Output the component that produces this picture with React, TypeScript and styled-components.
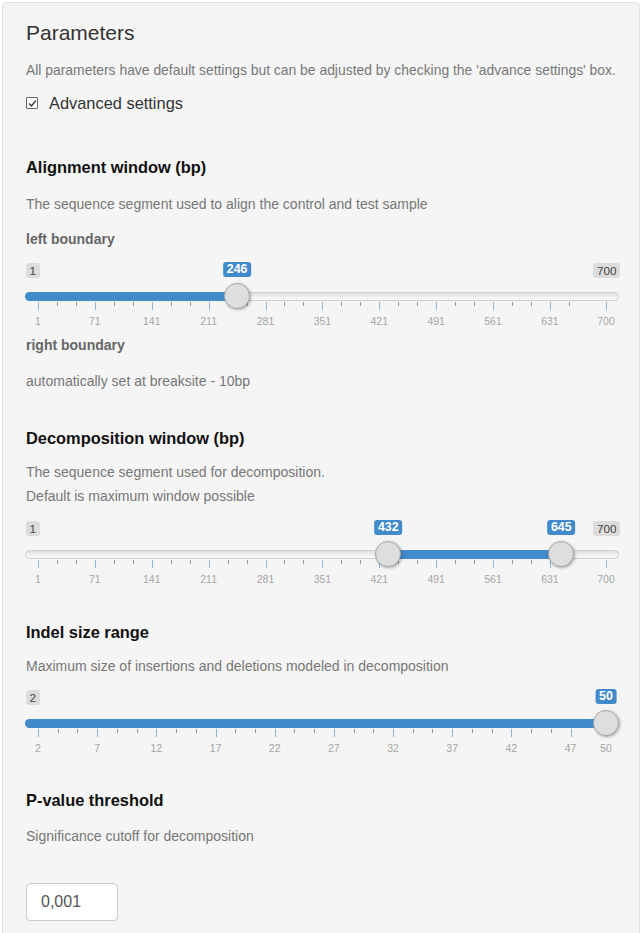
import React from 'react';
import styled, {createGlobalStyle} from 'styled-components';

const GlobalStyle = createGlobalStyle`
  body {
    margin: 0;
    background: #fff;
    font-family: "Liberation Sans", Arial, Helvetica, sans-serif;
  }
`;

const BLUE = '#428bca';

type SliderProps = {
  min: number;
  max: number;
  values: number[];
  step: number;
};

const RangeSlider: React.FC<SliderProps> = ({min, max, values, step}) => {
  const pct = (v: number) => (v - min) / (max - min);
  const at = (v: number) => `calc(13px + ${pct(v)} * (100% - 26px))`;

  const majors: number[] = [];
  for (let v = min; v < max; v += step) majors.push(v);
  majors.push(max);

  // two small ticks between each pair of labelled ticks
  const minors: number[] = [];
  majors.slice(0, -1).forEach((g) => {
    for (let k = 1; k < 3; k++) {
      const v = g + (step * k) / 3;
      if (v < max - step / 3) minors.push(v);
    }
  });

  const hideMin = values.some((v) => pct(v) < 0.06);
  const hideMax = values.some((v) => pct(v) > 0.94);
  const double = values.length > 1;
  const barLeft = double ? at(values[0]) : '0px';
  const barWidth = double
    ? `calc(${pct(values[1]) - pct(values[0])} * (100% - 26px))`
    : `calc(13px + ${pct(values[0])} * (100% - 26px))`;

  return (
    <SliderBox>
      {!hideMin && <EdgeLabel $side="left">{min}</EdgeLabel>}
      {!hideMax && <EdgeLabel $side="right">{max}</EdgeLabel>}
      <Track />
      <Bar $rounded={!double} style={{left: barLeft, width: barWidth}} />
      {minors.map((v) => (
        <Tick key={'m' + v} $major={false} style={{left: at(v)}} />
      ))}
      {majors.map((v) => (
        <React.Fragment key={'M' + v}>
          <Tick $major style={{left: at(v)}} />
          <GridText style={{left: at(v)}}>{v}</GridText>
        </React.Fragment>
      ))}
      {values.map((v) => (
        <React.Fragment key={'h' + v}>
          <ValueLabel style={{left: at(v)}}>{v}</ValueLabel>
          <Handle style={{left: at(v)}} />
        </React.Fragment>
      ))}
    </SliderBox>
  );
};

const App: React.FC = () => {
  return (
    <>
      <GlobalStyle />
      <Panel>
        <Title>Parameters</Title>
        <Intro>
          All parameters have default settings but can be adjusted by checking the 'advance settings' box.
        </Intro>
        <CheckRow>
          <CheckBox>
            <svg width="9" height="9" viewBox="0 0 9 9">
              <path d="M1.2 4.6 L3.5 7 L7.8 1.6" fill="none" stroke="#333" strokeWidth="1.4" />
            </svg>
          </CheckBox>
          <CheckText>Advanced settings</CheckText>
        </CheckRow>

        <Heading $gap={44}>Alignment window (bp)</Heading>
        <Desc $gap={17}>The sequence segment used to align the control and test sample</Desc>
        <SubLabel $gap={15}>left boundary</SubLabel>
        <SliderWrap $gap={13}>
          <RangeSlider min={1} max={700} values={[246]} step={70} />
        </SliderWrap>
        <SubLabel $gap={7}>right boundary</SubLabel>
        <Desc $gap={16}>automatically set at breaksite - 10bp</Desc>

        <Heading $gap={37}>Decomposition window (bp)</Heading>
        <Desc $gap={12} $lh={24}>
          The sequence segment used for decomposition.
          <br />
          Default is maximum window possible
        </Desc>
        <SliderWrap $gap={12}>
          <RangeSlider min={1} max={700} values={[432, 645]} step={70} />
        </SliderWrap>

        <Heading $gap={36}>Indel size range</Heading>
        <Desc $gap={14}>Maximum size of insertions and deletions modeled in decomposition</Desc>
        <SliderWrap $gap={13}>
          <RangeSlider min={2} max={50} values={[50]} step={5} />
        </SliderWrap>

        <Heading $gap={35}>P-value threshold</Heading>
        <Desc $gap={16}>Significance cutoff for decomposition</Desc>
        <NumberInput defaultValue="0,001" />
      </Panel>
    </>
  );
};

export default App;

const Panel = styled.div`
  box-sizing: border-box;
  width: 638px;
  margin: 2px 0 0 2px;
  padding: 18px 23px 30px 23px;
  background: #f5f5f5;
  border: 1px solid #e3e3e3;
  border-radius: 4px;
  display: flex;
  flex-direction: column;
  align-items: flex-start;
`;

const Title = styled.h4`
  margin: 0;
  font-size: 21px;
  line-height: 24px;
  font-weight: 400;
  color: #333;
`;

const Intro = styled.p`
  margin: 15px 0 0;
  font-size: 13.9px;
  line-height: 20px;
  color: #777;
  white-space: nowrap;
`;

const CheckRow = styled.label`
  margin-top: 13px;
  display: flex;
  align-items: center;
  height: 20px;
`;

const CheckBox = styled.span`
  box-sizing: border-box;
  width: 12px;
  height: 12px;
  border: 1px solid #666;
  border-radius: 1px;
  background: #fff;
  display: flex;
  align-items: center;
  justify-content: center;
`;

const CheckText = styled.span`
  margin-left: 11px;
  font-size: 16.4px;
  color: #333;
`;

const Heading = styled.h4<{$gap: number}>`
  margin: ${(p) => p.$gap}px 0 0;
  font-size: 16.4px;
  line-height: 20px;
  font-weight: 700;
  color: #111;
`;

const Desc = styled.p<{$gap: number; $lh?: number}>`
  margin: ${(p) => p.$gap}px 0 0;
  font-size: 14px;
  line-height: ${(p) => p.$lh ?? 20}px;
  color: #777;
`;

const SubLabel = styled.div<{$gap: number}>`
  margin-top: ${(p) => p.$gap}px;
  font-size: 14px;
  line-height: 20px;
  font-weight: 700;
  color: #666;
`;

const SliderWrap = styled.div<{$gap: number}>`
  margin-top: ${(p) => p.$gap}px;
  align-self: stretch;
  margin-left: -1px;
  margin-right: -3px;
`;

const SliderBox = styled.div`
  position: relative;
  height: 66px;
`;

const EdgeLabel = styled.span<{$side: 'left' | 'right'}>`
  position: absolute;
  top: 1px;
  ${(p) => (p.$side === 'left' ? 'left: 1px;' : 'right: -1px;')}
  padding: 1px 3.5px;
  font-size: 11.7px;
  line-height: 13px;
  color: #444;
  background: rgba(0, 0, 0, 0.1);
  border-radius: 3px;
`;

const ValueLabel = styled.span`
  position: absolute;
  top: 0;
  transform: translateX(-50%);
  padding: 1px 3.5px;
  font-size: 12.4px;
  font-weight: 700;
  line-height: 13px;
  color: #fff;
  background: ${BLUE};
  border-radius: 3px;
  white-space: nowrap;
`;

const Track = styled.div`
  position: absolute;
  top: 30px;
  left: 0;
  right: 0;
  box-sizing: border-box;
  height: 9px;
  border: 1px solid #cfcfcf;
  border-radius: 16px;
  background: linear-gradient(#e2e2e2, #f2f2f2 60%, #fafafa);
`;

const Bar = styled.div<{$rounded: boolean}>`
  position: absolute;
  top: 30px;
  height: 9px;
  background: ${BLUE};
  border-radius: ${(p) => (p.$rounded ? '16px 0 0 16px' : '0')};
`;

const Handle = styled.div`
  position: absolute;
  top: 21px;
  box-sizing: border-box;
  width: 26px;
  height: 26px;
  margin-left: -13px;
  border-radius: 50%;
  background: #dedede;
  border: 1px solid #aaa;
  box-shadow: 1px 1px 3px rgba(0, 0, 0, 0.3);
`;

const Tick = styled.span<{$major: boolean}>`
  position: absolute;
  top: 40px;
  width: 1px;
  height: ${(p) => (p.$major ? 8 : 4)}px;
  background: ${(p) => (p.$major ? '#8db6dd' : '#999')};
`;

const GridText = styled.span`
  position: absolute;
  top: 53px;
  transform: translateX(-50%);
  font-size: 10.5px;
  line-height: 12px;
  color: #a5a5a5;
  white-space: nowrap;
`;

const NumberInput = styled.input`
  margin-top: 37px;
  box-sizing: border-box;
  width: 92px;
  height: 38px;
  padding: 0 14px;
  border: 1px solid #ccc;
  border-radius: 4px;
  background: #fff;
  font-family: "Liberation Sans", Arial, sans-serif;
  font-size: 16px;
  color: #555;
  box-shadow: inset 0 1px 1px rgba(0, 0, 0, 0.05);
`;
